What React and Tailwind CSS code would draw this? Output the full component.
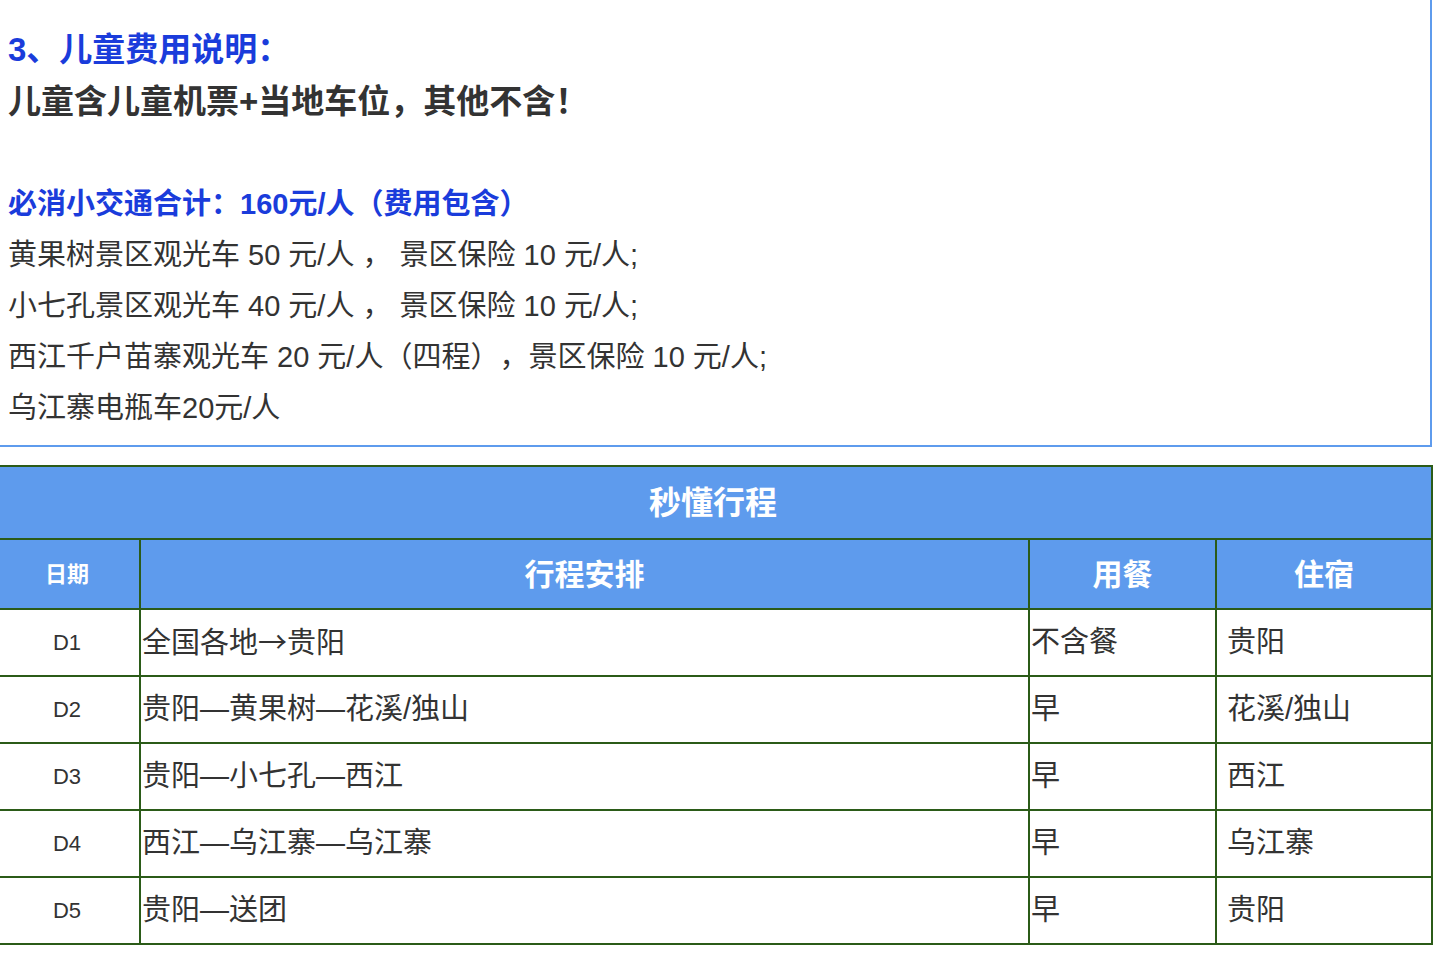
import React from "react";

const rows = [
  ["D1", <>全国各地<span style={{ fontFamily: '"Noto Sans CJK SC", sans-serif' }}>→</span>贵阳</>, "不含餐", "贵阳"],
  ["D2", "贵阳—黄果树—花溪/独山", "早", "花溪/独山"],
  ["D3", "贵阳—小七孔—西江", "早", "西江"],
  ["D4", "西江—乌江寨—乌江寨", "早", "乌江寨"],
  ["D5", "贵阳—送团", "早", "贵阳"],
];

export default function App() {
  return (
    <div
      className="w-[1434px] h-[964px] overflow-hidden bg-white text-[#333333]"
      style={{ fontFamily: '"Liberation Sans", "Noto Sans CJK SC", sans-serif' }}
    >
      <div className="-ml-[4px] -mt-[2px] w-[1436px] border-2 border-[#5e9bed] pl-[10px] pt-[24px] pb-[11px]">
        <div className="text-[33px] font-bold leading-[52px] text-[#1a3cdb]">3、儿童费用说明：</div>
        <div className="text-[33px] font-bold leading-[52px] text-[#333333]">儿童含儿童机票+当地车位，其他不含！</div>
        <div className="h-[51px]"></div>
        <div className="text-[29px] font-bold leading-[51px] text-[#1a3cdb]">必消小交通合计：160元/人（费用包含）</div>
        <div className="text-[29px] leading-[51px]">黄果树景区观光车 50 元/人 ， 景区保险 10 元/人;</div>
        <div className="text-[29px] leading-[51px]">小七孔景区观光车 40 元/人 ， 景区保险 10 元/人;</div>
        <div className="text-[29px] leading-[51px]">
          西江千户苗寨观光车 20 元/人（四程）<span className="inline-block">，</span>景区保险 10 元/人;
        </div>
        <div className="text-[29px] leading-[51px]">乌江寨电瓶车20元/人</div>
      </div>

      <table className="-ml-[7px] mt-[18px] w-[1438px] table-fixed border-collapse">
        <colgroup>
          <col className="w-[146px]" />
          <col className="w-[889px]" />
          <col className="w-[187px]" />
          <col className="w-[216px]" />
        </colgroup>
        <thead>
          <tr className="h-[73px] bg-[#5e9bed]">
            <th colSpan={4} className="border-2 border-[#2b5b18] text-center text-[32px] font-bold text-white">
              秒懂行程
            </th>
          </tr>
          <tr className="h-[70px] bg-[#5e9bed]">
            <th className="border-2 border-[#2b5b18] text-center text-[22px] font-bold text-white">日期</th>
            <th className="border-2 border-[#2b5b18] text-center text-[30px] font-bold text-white">行程安排</th>
            <th className="border-2 border-[#2b5b18] text-center text-[30px] font-bold text-white">用餐</th>
            <th className="border-2 border-[#2b5b18] text-center text-[30px] font-bold text-white">住宿</th>
          </tr>
        </thead>
        <tbody>
          {rows.map((r) => (
            <tr key={r[0]} className="h-[67px]">
              <td className="border-2 border-[#2b5b18] text-center text-[22px]">{r[0]}</td>
              <td className="border-2 border-[#2b5b18] pl-[1px] text-[29px]">{r[1]}</td>
              <td className="border-2 border-[#2b5b18] pl-[1px] text-[29px]">{r[2]}</td>
              <td className="border-2 border-[#2b5b18] pl-[10px] text-[29px]">{r[3]}</td>
            </tr>
          ))}
        </tbody>
      </table>
    </div>
  );
}
